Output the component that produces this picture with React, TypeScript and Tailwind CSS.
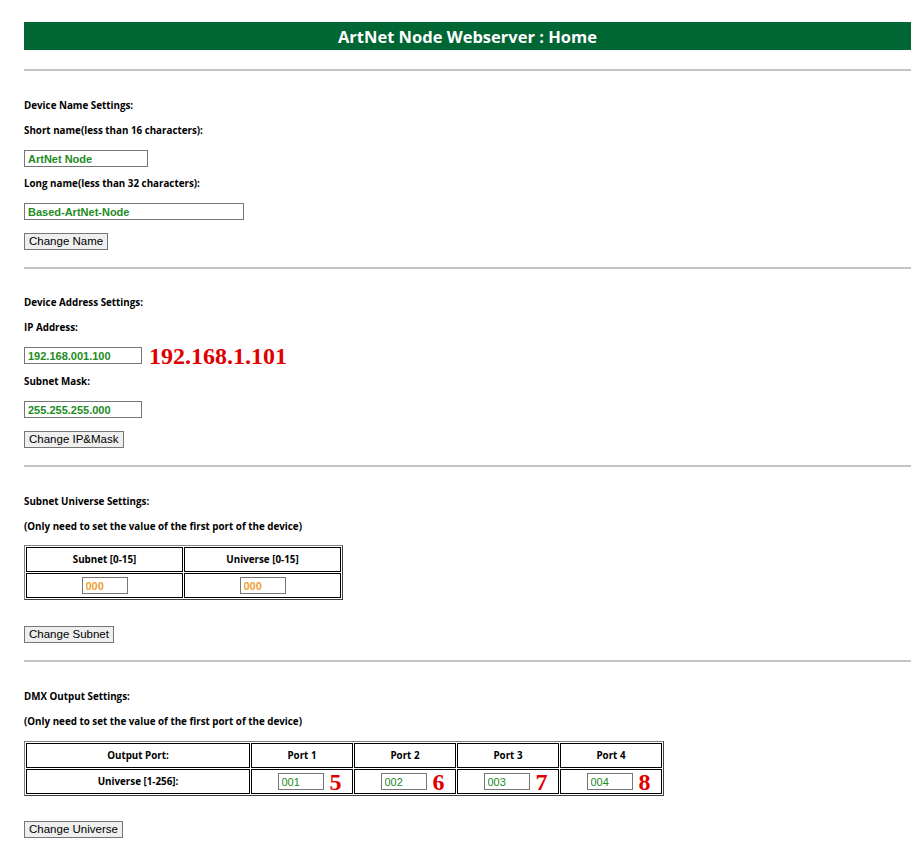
import React from 'react';

const label = "text-[9.8px] font-bold text-black leading-[12px]";
const inputBase = "block h-[17px] border border-[#767676] bg-white px-[3px] text-[11px] leading-[15px] outline-none";
const btn = "block h-[17px] border border-[#767676] bg-[#efefef] px-[4px] text-[11.5px] leading-[15px] text-black";
const arial = { fontFamily: '"Liberation Sans", Arial, sans-serif' };
const cell = "border border-black text-center align-middle";

const Field: React.FC<{ value: string; width: string }> = ({ value, width }) => (
  <input readOnly value={value} className={`${inputBase} ${width} font-bold text-[#228b22]`} style={arial} />
);

const Rule = () => <div className="h-[2px] w-full bg-[#c4c4c4]" />;

const RedNum: React.FC<{ children: React.ReactNode }> = ({ children }) => (
  <span className="text-[24px] font-bold leading-none text-[#e00000]" style={{ fontFamily: '"Liberation Serif", "Times New Roman", serif' }}>
    {children}
  </span>
);

export default function App() {
  return (
    <div className="min-h-[852px] bg-white pl-[24px] pr-[9px] pt-[22px]" style={{ fontFamily: '"Open Sans", Tahoma, sans-serif' }}>
      <div className="flex h-[28px] items-center justify-center bg-[#006633] pt-[3px]">
        <h1 className="text-[16.5px] font-bold leading-none text-white">ArtNet Node Webserver : Home</h1>
      </div>

      <div className="mt-[19px]"><Rule /></div>

      {/* Device name */}
      <div className="pt-[29px]">
        <p className={label}>Device Name Settings:</p>
        <p className={`${label} mt-[13px]`}>Short name(less than 16 characters):</p>
        <div className="mt-[13px]"><Field value="ArtNet Node" width="w-[124px]" /></div>
        <p className={`${label} mt-[11px]`}>Long name(less than 32 characters):</p>
        <div className="mt-[13px]"><Field value="Based-ArtNet-Node" width="w-[220px]" /></div>
        <button className={`${btn} mt-[13px]`} style={arial}>Change Name</button>
      </div>

      <div className="mt-[17px]"><Rule /></div>

      {/* Device address */}
      <div className="pt-[28px]">
        <p className={label}>Device Address Settings:</p>
        <p className={`${label} mt-[13px]`}>IP Address:</p>
        <div className="mt-[13px] flex h-[17px] items-center gap-[7px]">
          <Field value="192.168.001.100" width="w-[118px]" />
          <RedNum>192.168.1.101</RedNum>
        </div>
        <p className={`${label} mt-[12px]`}>Subnet Mask:</p>
        <div className="mt-[13px]"><Field value="255.255.255.000" width="w-[118px]" /></div>
        <button className={`${btn} mt-[13px]`} style={arial}>Change IP&amp;Mask</button>
      </div>

      <div className="mt-[17px]"><Rule /></div>

      {/* Subnet universe */}
      <div className="pt-[29px]">
        <p className={label}>Subnet Universe Settings:</p>
        <p className={`${label} mt-[13px]`}>(Only need to set the value of the first port of the device)</p>
        <table className="mt-[12px] border-separate border-spacing-[1px] border border-[#808080] border-b-[#404040] border-r-[#404040]">
          <tbody>
            <tr>
              <td className={`w-[157px] h-[25px] ${cell} ${label}`}>Subnet [0-15]</td>
              <td className={`w-[157px] h-[25px] ${cell} ${label}`}>Universe [0-15]</td>
            </tr>
            <tr>
              {[0, 1].map(i => (
                <td key={i} className={`h-[25px] ${cell}`}>
                  <input readOnly value="000" className={`${inputBase} mx-auto w-[46px] font-bold text-[#f0a030]`} style={arial} />
                </td>
              ))}
            </tr>
          </tbody>
        </table>
        <button className={`${btn} mt-[26px]`} style={arial}>Change Subnet</button>
      </div>

      <div className="mt-[17px]"><Rule /></div>

      {/* DMX output */}
      <div className="pt-[29px]">
        <p className={label}>DMX Output Settings:</p>
        <p className={`${label} mt-[13px]`}>(Only need to set the value of the first port of the device)</p>
        <table className="mt-[13px] border-separate border-spacing-[1px] border border-[#808080] border-b-[#404040] border-r-[#404040]">
          <tbody>
            <tr>
              <td className={`w-[224px] h-[25px] ${cell} ${label}`}>Output Port:</td>
              {['Port 1', 'Port 2', 'Port 3', 'Port 4'].map(p => (
                <td key={p} className={`w-[102px] h-[25px] ${cell} ${label}`}>{p}</td>
              ))}
            </tr>
            <tr>
              <td className={`h-[25px] ${cell} ${label}`}>Universe [1-256]:</td>
              {[['001', '5'], ['002', '6'], ['003', '7'], ['004', '8']].map(([v, n]) => (
                <td key={v} className={`h-[25px] ${cell}`}>
                  <div className="flex h-[17px] items-center justify-center gap-[6px] pl-[15px]">
                    <input readOnly value={v} className={`${inputBase} w-[46px] text-[#228b22]`} style={arial} />
                    <RedNum>{n}</RedNum>
                  </div>
                </td>
              ))}
            </tr>
          </tbody>
        </table>
        <button className={`${btn} mt-[25px]`} style={arial}>Change Universe</button>
      </div>
    </div>
  );
}
